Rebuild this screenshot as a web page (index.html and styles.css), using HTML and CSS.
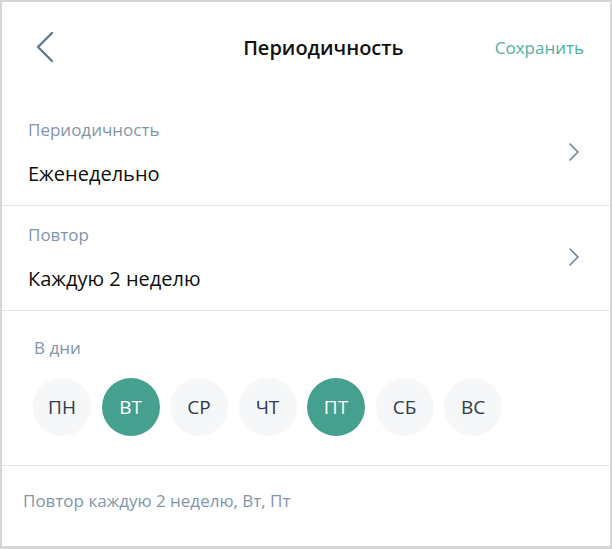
FILE: index.html
```html
<!DOCTYPE html>
<html lang="ru">
<head>
<meta charset="utf-8">
<title>Периодичность</title>
<link rel="stylesheet" href="styles.css">
</head>
<body>
<div class="frame">
  <header class="header">
    <button class="back" aria-label="Назад">
      <svg width="20" height="32" viewBox="0 0 20 32"><polyline points="17,2 3,16 17,30" fill="none" stroke="#5f7a94" stroke-width="2.4" stroke-linecap="round" stroke-linejoin="round"/></svg>
    </button>
    <h1 class="title">Периодичность</h1>
    <a class="save">Сохранить</a>
  </header>
  <div class="row">
    <div class="row-text">
      <div class="label">Периодичность</div>
      <div class="value">Еженедельно</div>
    </div>
    <svg class="chev" width="12" height="20" viewBox="0 0 12 20"><polyline points="2,2 10,10 2,18" fill="none" stroke="#6c8298" stroke-width="1.6" stroke-linecap="round" stroke-linejoin="round"/></svg>
  </div>
  <div class="row">
    <div class="row-text">
      <div class="label">Повтор</div>
      <div class="value">Каждую 2 неделю</div>
    </div>
    <svg class="chev" width="12" height="20" viewBox="0 0 12 20"><polyline points="2,2 10,10 2,18" fill="none" stroke="#6c8298" stroke-width="1.6" stroke-linecap="round" stroke-linejoin="round"/></svg>
  </div>
  <div class="days">
    <div class="days-label">В дни</div>
    <div class="day-list">
      <span class="day">ПН</span>
      <span class="day on">ВТ</span>
      <span class="day">СР</span>
      <span class="day">ЧТ</span>
      <span class="day on">ПТ</span>
      <span class="day">СБ</span>
      <span class="day">ВС</span>
    </div>
  </div>
  <div class="summary">Повтор каждую 2 неделю, Вт, Пт</div>
</div>
</body>
</html>
```
FILE: styles.css
```css
* { box-sizing: border-box; }
html, body { margin: 0; padding: 0; background: #fff; }
body { font-family: "Open Sans", "Noto Sans", sans-serif; }
.frame {
  width: 612px;
  height: 549px;
  border: 2px solid #d6d6d6;
  border-bottom-width: 3px;
  background: #fff;
  display: flex;
  flex-direction: column;
}
.header {
  height: 98px;
  display: flex;
  align-items: flex-start;
  padding: 0 26px 0 33px;
}
.back {
  border: 0;
  background: none;
  padding: 0;
  margin-top: 29px;
  width: 20px;
  height: 32px;
  display: block;
}
.back svg { display: block; }
.title {
  flex: 1;
  margin: 32px 0 0;
  text-align: center;
  font-size: 20px;
  line-height: 28px;
  font-weight: 600;
  color: #111;
  padding-left: 97px;
}
.save {
  margin-top: 33px;
  font-size: 17px;
  line-height: 26px;
  color: #4fb19b;
}
.row {
  display: flex;
  align-items: center;
  padding: 19px 30px 18px 26px;
  border-bottom: 1px solid #e2e4e7;
}
.row + .row { padding-top: 18px; }
.row-text { flex: 1; }
.label {
  font-size: 17px;
  line-height: 22px;
  color: #8196ab;
}
.value {
  margin-top: 20px;
  font-size: 20px;
  line-height: 26px;
  color: #0f0f0f;
}
.chev { display: block; margin-top: -2px; }
.days {
  padding: 26px 20px 29px 31px;
  border-bottom: 1px solid #e2e4e7;
}
.days-label {
  padding-left: 1px;
  font-size: 17px;
  line-height: 22px;
  color: #8196ab;
}
.day-list {
  margin-top: 19px;
  display: flex;
  gap: 10.5px;
}
.day {
  width: 58px;
  height: 58px;
  border-radius: 50%;
  background: #f5f7f9;
  color: #2e3b4c;
  font-size: 19px;
  display: flex;
  align-items: center;
  justify-content: center;
}
.day.on {
  background: #45a08f;
  color: #fff;
}
.summary {
  padding: 24px 20px 0 21px;
  font-size: 17px;
  line-height: 22px;
  color: #8196ab;
}
```
